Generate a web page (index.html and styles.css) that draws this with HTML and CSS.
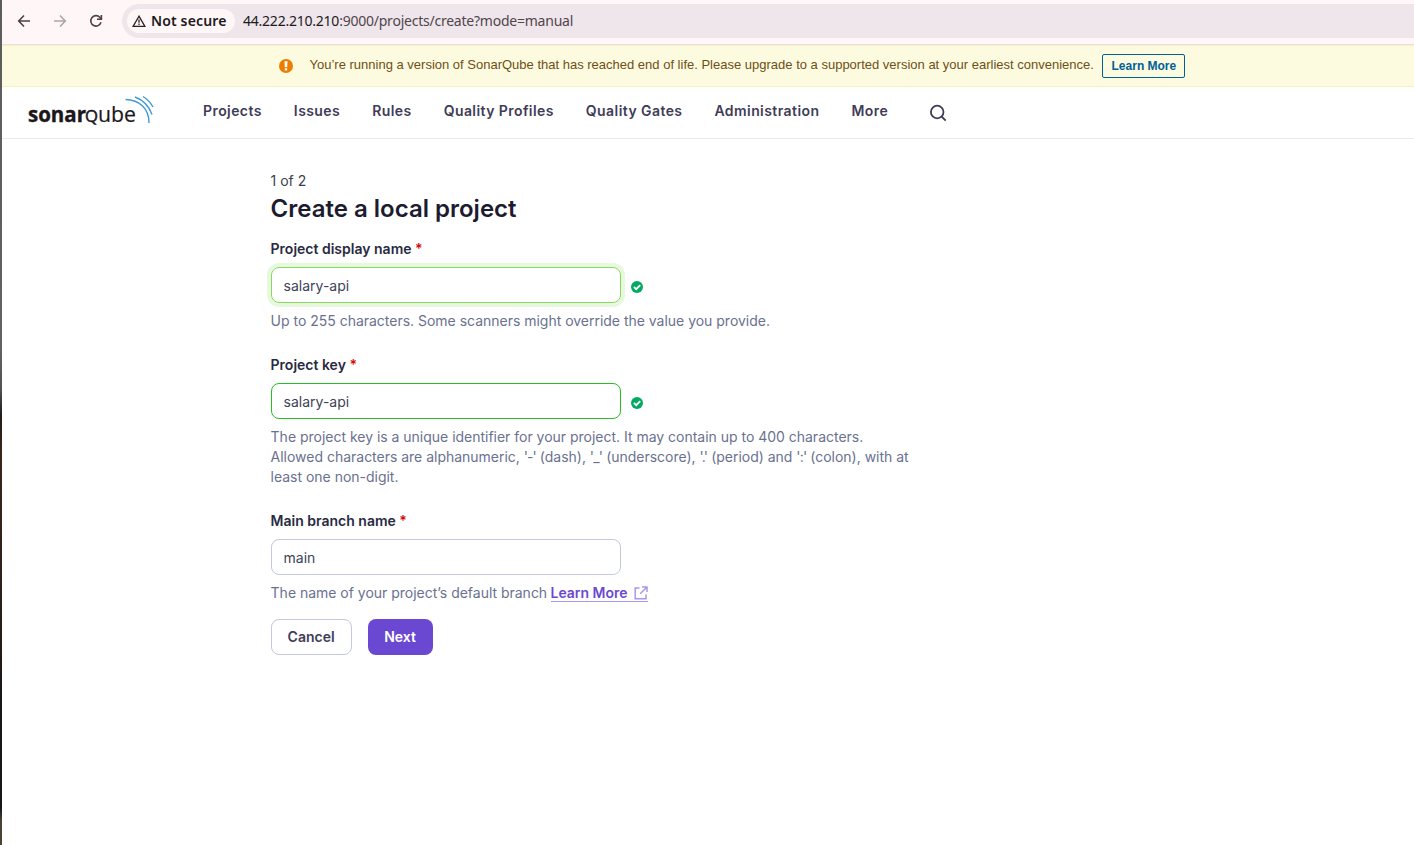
FILE: index.html
```html
<!DOCTYPE html>
<html lang="en">
<head>
<meta charset="utf-8">
<title>Create a local project</title>
<link rel="stylesheet" href="styles.css">
</head>
<body>
<div class="edge"></div>
<div class="window">
  <div class="toolbar">
    <svg class="tool" width="16" height="16" viewBox="0 0 16 16" fill="none" stroke="#51403f" stroke-width="1.6"><path d="M14 8H3M8 2.5L2.7 8L8 13.5"/></svg>
    <svg class="tool" width="16" height="16" viewBox="0 0 16 16" fill="none" stroke="#aea5a4" stroke-width="1.6"><path d="M2 8H13M8 2.5L13.3 8L8 13.5"/></svg>
    <svg class="tool" width="16" height="16" viewBox="0 0 16 16" fill="none" stroke="#51403f" stroke-width="1.6"><path d="M13 9.3A5.2 5.2 0 1 1 11.8 4.3L13.3 5.8M13.4 2V6.3H9"/></svg>
    <div class="address">
      <div class="chip">
        <svg width="14" height="12" viewBox="0 0 14 12" fill="none" stroke="#292326" stroke-width="1.3"><path d="M7 1.2L12.9 11.3H1.1Z"/><path d="M7 4.5V7.8M7 8.6V10"/></svg>
        <span class="chip-text">Not secure</span>
      </div>
      <span class="url"><b>44.222.210.210</b>:9000/projects/create?mode=manual</span>
    </div>
  </div>
  <div class="banner">
    <svg width="14" height="14" viewBox="0 0 14 14"><circle cx="7" cy="7" r="7" fill="#ed7d00"/><path d="M5.5 2.3H8.5L8.2 8.3H5.8ZM5.8 9.2H8.2V11.6H5.8Z" fill="#fff"/></svg>
    <span class="banner-text">You’re running a version of SonarQube that has reached end of life. Please upgrade to a supported version at your earliest convenience.</span>
    <a class="banner-btn">Learn More</a>
  </div>
  <header class="nav">
    <svg class="logo" width="128" height="34" viewBox="0 0 128 34">
      <g fill="#1b171b" font-family="Open Sans, sans-serif">
        <text x="0" y="25.600" font-size="20.500" font-weight="700" stroke="#1b171b" stroke-width="0.400" textLength="58" lengthAdjust="spacingAndGlyphs">sonar</text>
        <text x="57" y="25.600" font-size="21" stroke="#1b171b" stroke-width="0.200" textLength="51" lengthAdjust="spacingAndGlyphs"><tspan font-size="16.500" stroke-width="0.500">Q</tspan>ube</text>
      </g>
      <g fill="none" stroke="#3e9bd3" stroke-width="1.4"><path d="M97.5 3.500C111 4 121 12 121 27"/><path d="M107 1C115 4 121 10 124 18.5"/><path d="M115 0.500C119 3 122.500 6.500 125 11"/></g>
    </svg>
    <nav class="links"><a>Projects</a><a>Issues</a><a>Rules</a><a>Quality Profiles</a><a>Quality Gates</a><a>Administration</a><a>More</a></nav>
    <svg class="search" width="18" height="18" viewBox="0 0 18 18" fill="none" stroke="#3f3c58" stroke-width="1.8"><circle cx="8.200" cy="8" r="6.300"/><path d="M12.600 12.500L16.700 16.600"/></svg>
  </header>
  <main class="form">
    <div class="step">1 of 2</div>
    <h1>Create a local project</h1>
    <div class="field">
      <label>Project display name <i>*</i></label>
      <div class="row"><div class="input focused">salary-api</div>
        <svg width="12" height="12" viewBox="0 0 12 12"><circle cx="6" cy="6" r="6" fill="#00aa63"/><path d="M2.900 5.900L5.200 8.100L9.200 4.100" fill="none" stroke="#fff" stroke-width="1.900"/></svg></div>
      <p>Up to 255 characters. Some scanners might override the value you provide.</p>
    </div>
    <div class="field">
      <label>Project key <i>*</i></label>
      <div class="row"><div class="input valid">salary-api</div>
        <svg width="12" height="12" viewBox="0 0 12 12"><circle cx="6" cy="6" r="6" fill="#00aa63"/><path d="M2.900 5.900L5.200 8.100L9.200 4.100" fill="none" stroke="#fff" stroke-width="1.900"/></svg></div>
      <p>The project key is a unique identifier for your project. It may contain up to 400 characters.<br>Allowed characters are alphanumeric, <span class="dash">'-'</span> (dash), <span class="quoted">'_'</span> (underscore), <span class="quoted">'.'</span> (period) and <span class="quoted">':'</span> (colon), with at<br>least one non-digit.</p>
    </div>
    <div class="field">
      <label>Main branch name <i>*</i></label>
      <div class="row"><div class="input">main</div></div>
      <p>The name of your project’s default branch <a class="more">Learn More<svg width="14" height="14" viewBox="0 0 14 14" fill="none" stroke="#a698eb" stroke-width="1.500"><path d="M5.500 2H1.200V12.800H12V8.500M8 1H13V6M13 1L6.200 7.800"/></svg></a></p>
    </div>
    <div class="actions"><button class="btn cancel">Cancel</button><button class="btn next">Next</button></div>
  </main>
</div>
</body>
</html>
```
FILE: styles.css
```css
* { box-sizing: border-box; }
body { margin: 0; height: 845px; display: flex; overflow: hidden; background: #fff; font-family: Inter, "Noto Sans", sans-serif; font-size: 14px; line-height: 20px; }
svg { flex: none; display: block; }
.edge { width: 2px; height: 845px; flex: none; background: linear-gradient(#5c5c5c 0, #626262 350px, #505152 390px, #211d1b 415px, #3b2519 450px, #2f211b 580px, #191716 700px, #171717 808px, #494035 820px, #4d4437 845px); }
.window { flex: 1; min-width: 0; }
.toolbar { height: 45px; background: #fff7f7; border-bottom: 1px solid #e9dfe5; display: flex; align-items: flex-start; padding: 4px 0 0 14px; }
.tool { margin: 9px 20px 0 0; }
.address { flex: 1; height: 34px; margin-left: -2px; padding-left: 5px; border-radius: 17px 0 0 17px; background: #efe6eb; display: flex; align-items: center; }
.chip { height: 24px; width: 108px; padding-left: 5px; border-radius: 12px; background: #fff7f7; display: flex; align-items: center; gap: 5px; }
.chip-text { font: 600 14px/20px "Noto Sans", sans-serif; color: #201a1c; white-space: nowrap; letter-spacing: 0.14px; }
.url { margin-left: 8px; font: 14px/20px "Noto Sans", sans-serif; color: #51454b; white-space: nowrap; letter-spacing: -0.23px; }
.url b { font-weight: 400; color: #201a1c; }
.banner { height: 42px; background: #fcfbe0; border-top: 1px solid #faedc0; border-bottom: 1px solid #faedc0; display: flex; align-items: center; padding-left: 277px; font-family: "Liberation Sans", sans-serif; }
.banner-text { margin: -3px 8.500px 0 16.500px; font-size: 13px; color: #6f4f17; white-space: nowrap; }
.banner-btn { width: 83px; height: 24px; border: 1px solid #00609a; border-radius: 2px; color: #00609a; font-size: 12px; font-weight: 700; line-height: 22px; text-align: center; }
.nav { height: 52px; border-bottom: 1px solid #e9e9ed; display: flex; align-items: flex-start; padding-left: 26px; }
.logo { margin-top: 9px; overflow: visible; }
.links { margin: 14px 0 0 47px; display: flex; gap: 32px; color: #3f3c58; font-weight: 600; letter-spacing: 0.425px; white-space: nowrap; }
.search { margin: 17px 0 0 41px; }
.form { padding: 32px 0 0 268.600px; }
.step { color: #3d3d4d; }
h1 { margin: 2px 0 14px; font-size: 24px; line-height: 32px; font-weight: 600; color: #1d1b30; }
.field { margin-bottom: 24px; }
label { display: block; color: #292a42; font-weight: 600; }
label i { color: #d20a0a; font-style: normal; }
.row { display: flex; align-items: center; gap: 10px; margin-top: 8px; }
.row svg { margin-top: 4px; }
.input { width: 350px; height: 36px; padding: 0 12px; border: 1px solid #c4c8e0; border-radius: 8px; line-height: 36px; color: #3e4357; }
.valid { border-color: #27bd27; }
.focused { border-color: #84dc58; box-shadow: 0 0 0 4px #e8f8df; }
p { margin: 8px 0 0; color: #6a7190; white-space: nowrap; letter-spacing: -0.015px; }
.dash { letter-spacing: -0.9px; }
.quoted { letter-spacing: -0.8px; }
.more { display: inline-flex; align-items: center; height: 19px; gap: 6px; margin-left: -0.5px; color: #6b48d2; font-weight: 600; border-bottom: 1px solid #a698eb; vertical-align: top; line-height: 20px; padding-top: 1px; }
.actions { display: flex; gap: 16px; margin-top: -8px; }
.btn { height: 36px; padding: 0; border-radius: 8px; font: 600 14px/20px Inter, sans-serif; }
.cancel { width: 81px; border: 1px solid #c4c8e0; background: #fff; color: #3e3d57; }
.next { width: 65px; border: 0; background: #6b48d2; color: #fff; }
```
